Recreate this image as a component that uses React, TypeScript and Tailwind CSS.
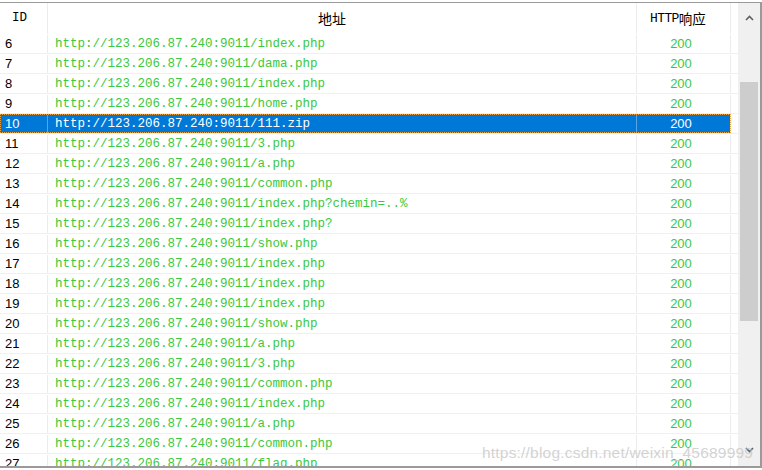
import React from 'react';

const rows: { id: number; url: string }[] = [
  { id: 6, url: 'http://123.206.87.240:9011/index.php' },
  { id: 7, url: 'http://123.206.87.240:9011/dama.php' },
  { id: 8, url: 'http://123.206.87.240:9011/index.php' },
  { id: 9, url: 'http://123.206.87.240:9011/home.php' },
  { id: 10, url: 'http://123.206.87.240:9011/111.zip' },
  { id: 11, url: 'http://123.206.87.240:9011/3.php' },
  { id: 12, url: 'http://123.206.87.240:9011/a.php' },
  { id: 13, url: 'http://123.206.87.240:9011/common.php' },
  { id: 14, url: 'http://123.206.87.240:9011/index.php?chemin=..%' },
  { id: 15, url: 'http://123.206.87.240:9011/index.php?' },
  { id: 16, url: 'http://123.206.87.240:9011/show.php' },
  { id: 17, url: 'http://123.206.87.240:9011/index.php' },
  { id: 18, url: 'http://123.206.87.240:9011/index.php' },
  { id: 19, url: 'http://123.206.87.240:9011/index.php' },
  { id: 20, url: 'http://123.206.87.240:9011/show.php' },
  { id: 21, url: 'http://123.206.87.240:9011/a.php' },
  { id: 22, url: 'http://123.206.87.240:9011/3.php' },
  { id: 23, url: 'http://123.206.87.240:9011/common.php' },
  { id: 24, url: 'http://123.206.87.240:9011/index.php' },
  { id: 25, url: 'http://123.206.87.240:9011/a.php' },
  { id: 26, url: 'http://123.206.87.240:9011/common.php' },
  { id: 27, url: 'http://123.206.87.240:9011/flag.php' },
];

const SELECTED = 10;

export default function App() {
  return (
    <div className="w-[762px] h-[470px] bg-white overflow-hidden relative pt-[2px]">
      <div className="h-[466px] border-t border-b-2 border-[#9a9a9a] flex overflow-hidden">
        {/* table */}
        <div className="w-[738px] flex flex-col overflow-hidden">
          {/* header */}
          <div className="h-[31px] shrink-0 flex text-black">
            <div className="w-[48px] border-r border-[#ececec] flex items-center pl-[12px] font-['Liberation_Mono',monospace] text-[12.5px]">
              ID
            </div>
            <div className="w-[589px] border-r border-[#ececec] flex items-center justify-center pr-[20px] font-['Noto_Sans_CJK_SC',sans-serif] text-[14px]">
              地址
            </div>
            <div className="w-[94px] border-r border-[#ececec] flex items-center pl-[13px]">
              <span className="font-['Liberation_Mono',monospace] text-[13px] tracking-[-0.6px]">HTTP</span>
              <span className="font-['Noto_Sans_CJK_SC',sans-serif] text-[13.5px]">响应</span>
            </div>
            <div className="flex-1" />
          </div>

          {/* rows */}
          {rows.map((r) => {
            const sel = r.id === SELECTED;
            return (
              <div key={r.id} className="h-[20px] shrink-0 flex border-b border-[#f0f0f0]">
                <div
                  className={`w-[731px] flex pt-[1px] ${
                    sel ? 'bg-[#0078d7] text-white outline outline-1 outline-dotted outline-[#e8a040] -outline-offset-1' : ''
                  }`}
                >
                  <div
                    className={`w-[48px] border-r ${sel ? 'border-[#5aa4e4]' : 'border-[#ececec]'} pl-[5px] flex items-center font-['Liberation_Sans',sans-serif] text-[13px] ${
                      sel ? 'text-white' : 'text-black'
                    }`}
                  >
                    {r.id}
                  </div>
                  <div
                    className={`w-[589px] border-r ${sel ? 'border-[#5aa4e4]' : 'border-[#ececec]'} pl-[7px] flex items-center font-['Liberation_Mono',monospace] text-[12.5px] whitespace-pre ${
                      sel ? 'text-white' : 'text-[#3cc83c]'
                    }`}
                  >
                    {r.url}
                  </div>
                  <div
                    className={`w-[94px] border-r border-[#ececec] flex items-center justify-center pr-[5px] font-['Liberation_Sans',sans-serif] text-[13px] ${
                      sel ? 'text-white' : 'text-[#3cc83c]'
                    }`}
                  >
                    200
                  </div>
                </div>
                <div className="flex-1" />
              </div>
            );
          })}
        </div>

        {/* scrollbar */}
        <div className="w-[24px] bg-[#f0f0f0] border-r-2 border-[#9a9a9a] flex flex-col items-center">
          <div className="h-[30px] w-full flex items-center justify-center">
            <svg width="9" height="6" viewBox="0 0 9 6">
              <path d="M1 5 L4.5 1.5 L8 5" fill="none" stroke="#606060" strokeWidth="1.6" />
            </svg>
          </div>
          <div className="mt-[49px] w-[18px] h-[239px] bg-[#cdcdcd]" />
          <div className="flex-1" />
          <div className="h-[22px] w-full flex items-start justify-center pt-[3px]">
            <svg width="9" height="6" viewBox="0 0 9 6">
              <path d="M1 1 L4.5 4.5 L8 1" fill="none" stroke="#606060" strokeWidth="1.6" />
            </svg>
          </div>
        </div>
      </div>

      {/* watermark */}
      <div className="absolute left-[482px] top-[441px] font-['Liberation_Sans',sans-serif] text-[15.5px] tracking-[0.2px] text-[#c8c8c8]/80 pointer-events-none">
        https://blog.csdn.net/weixin_45689999
      </div>
    </div>
  );
}
